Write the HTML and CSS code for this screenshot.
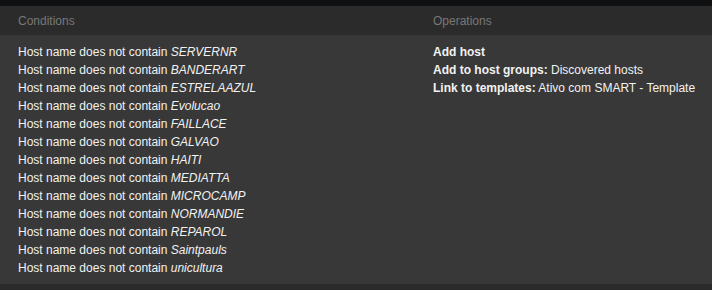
FILE: index.html
```html
<!DOCTYPE html>
<html lang="en">
<head>
  <meta charset="UTF-8">
  <title>Discovery action</title>
  <link rel="stylesheet" href="styles.css">
</head>
<body>
  <div class="topbar"></div>
  <div class="action-table">
    <div class="row head">
      <div class="cell">Conditions</div>
      <div class="cell">Operations</div>
    </div>
    <div class="row body">
      <div class="cell">
        <div>Host name does not contain <em>SERVERNR</em></div>
        <div>Host name does not contain <em>BANDERART</em></div>
        <div>Host name does not contain <em>ESTRELAAZUL</em></div>
        <div>Host name does not contain <em>Evolucao</em></div>
        <div>Host name does not contain <em>FAILLACE</em></div>
        <div>Host name does not contain <em>GALVAO</em></div>
        <div>Host name does not contain <em>HAITI</em></div>
        <div>Host name does not contain <em>MEDIATTA</em></div>
        <div>Host name does not contain <em>MICROCAMP</em></div>
        <div>Host name does not contain <em>NORMANDIE</em></div>
        <div>Host name does not contain <em>REPAROL</em></div>
        <div>Host name does not contain <em>Saintpauls</em></div>
        <div>Host name does not contain <em>unicultura</em></div>
      </div>
      <div class="cell">
        <div><strong>Add host</strong></div>
        <div><strong>Add to host groups:</strong> Discovered hosts</div>
        <div><strong>Link to templates:</strong> Ativo com SMART - Template</div>
      </div>
    </div>
  </div>
  <div class="footer"></div>
</body>
</html>
```

FILE: styles.css
```css
* {
  margin: 0;
  padding: 0;
  box-sizing: border-box;
}

body {
  font-family: Arial, 'Liberation Sans', sans-serif;
  font-size: 12px;
  background: #2b2b2b;
  color: #f2f2f2;
}

.topbar {
  height: 6px;
  background: #0f1012;
}

.row {
  display: grid;
  grid-template-columns: 415px 1fr;
  padding-left: 18px;
}

.head {
  height: 29px;
  align-items: center;
  background: #2b2b2b;
  color: #787878;
}

.body {
  background: #383838;
  padding-top: 8px;
  padding-bottom: 7px;
  line-height: 18px;
}

.footer {
  height: 6px;
  background: #2b2b2b;
}
```
